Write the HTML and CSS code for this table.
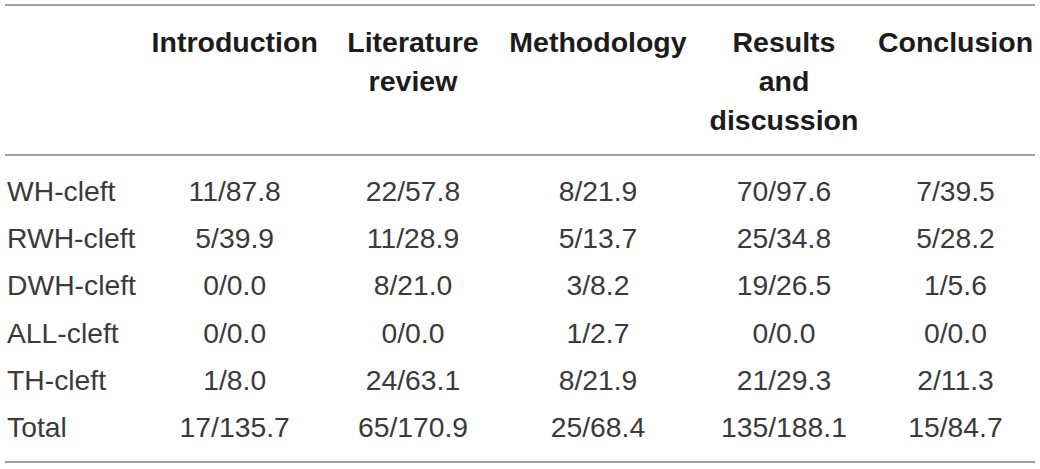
FILE: index.html
```html
<!DOCTYPE html>
<html>
<head>
<meta charset="utf-8">
<link rel="stylesheet" href="styles.css">
</head>
<body>
<div class="table">
  <div class="row head">
    <div class="cell first"></div>
    <div class="cell">Introduction</div>
    <div class="cell">Literature<br>review</div>
    <div class="cell">Methodology</div>
    <div class="cell">Results<br>and<br>discussion</div>
    <div class="cell">Conclusion</div>
  </div>
  <div class="body">
    <div class="row"><div class="cell first">WH-cleft</div><div class="cell">11/87.8</div><div class="cell">22/57.8</div><div class="cell">8/21.9</div><div class="cell">70/97.6</div><div class="cell">7/39.5</div></div>
    <div class="row"><div class="cell first">RWH-cleft</div><div class="cell">5/39.9</div><div class="cell">11/28.9</div><div class="cell">5/13.7</div><div class="cell">25/34.8</div><div class="cell">5/28.2</div></div>
    <div class="row"><div class="cell first">DWH-cleft</div><div class="cell">0/0.0</div><div class="cell">8/21.0</div><div class="cell">3/8.2</div><div class="cell">19/26.5</div><div class="cell">1/5.6</div></div>
    <div class="row"><div class="cell first">ALL-cleft</div><div class="cell">0/0.0</div><div class="cell">0/0.0</div><div class="cell">1/2.7</div><div class="cell">0/0.0</div><div class="cell">0/0.0</div></div>
    <div class="row"><div class="cell first">TH-cleft</div><div class="cell">1/8.0</div><div class="cell">24/63.1</div><div class="cell">8/21.9</div><div class="cell">21/29.3</div><div class="cell">2/11.3</div></div>
    <div class="row"><div class="cell first">Total</div><div class="cell">17/135.7</div><div class="cell">65/170.9</div><div class="cell">25/68.4</div><div class="cell">135/188.1</div><div class="cell">15/84.7</div></div>
  </div>
</div>
</body>
</html>
```

FILE: styles.css
```css
html, body {
  margin: 0;
  padding: 0;
  background: #ffffff;
}

body {
  font-family: "Liberation Sans", Arial, Helvetica, sans-serif;
  color: #3a3a3a;
}

.table {
  width: 1030px;
  margin: 4px 0 0 5px;
  border-top: 2px solid #a0a0a0;
  border-bottom: 2px solid #a0a0a0;
}

.row {
  display: grid;
  grid-template-columns: 132.4px 194.6px 162px 208px 164px 179px;
  width: 1030px;
}

.cell {
  text-align: center;
  white-space: nowrap;
}

.cell.first {
  text-align: left;
  padding-left: 2px;
}

.head {
  padding: 16.5px 0 14.5px;
  border-bottom: 2px solid #a0a0a0;
  font-weight: bold;
  font-size: 28.5px;
  line-height: 39px;
  color: #1c1c1c;
  align-items: start;
}

.body {
  padding: 11.7px 0 9.5px;
}

.body .row {
  font-size: 28.3px;
  line-height: 47.3px;
  height: 47.3px;
}
```
